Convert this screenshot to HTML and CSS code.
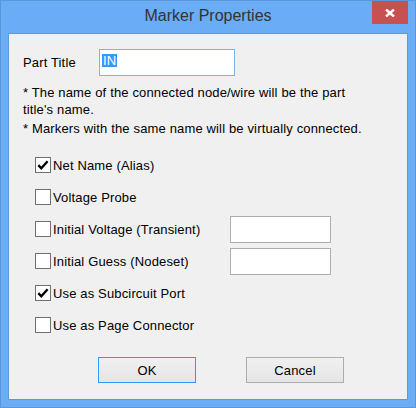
FILE: index.html
```html
<!DOCTYPE html>
<html>
<head>
<meta charset="utf-8">
<link rel="stylesheet" href="styles.css">
</head>
<body>
<div class="window">
  <div class="titlebar">
    <span class="title">Marker Properties</span>
    <div class="close">
      <svg width="10" height="8" viewBox="0 0 10 8"><path d="M1 0.5 L9 7.5 M9 0.5 L1 7.5" stroke="#fff" stroke-width="2.4"/></svg>
    </div>
  </div>
  <div class="client">
    <div class="title-row">
      <span class="lbl">Part Title</span>
      <div class="textbox focus"><span class="sel">IN</span></div>
    </div>
    <p class="note">* The name of the connected node/wire will be the part title's name.</p>
    <p class="note">* Markers with the same name will be virtually connected.</p>
    <div class="options">
      <div class="row"><span class="cb checked"><svg width="14" height="14" viewBox="0 0 14 14"><path d="M2.3 7.2 L5.3 10.3 L11.6 3.2" fill="none" stroke="#000" stroke-width="2.4"/></svg></span><span>Net Name (Alias)</span></div>
      <div class="row"><span class="cb"></span><span>Voltage Probe</span></div>
      <div class="row"><span class="cb"></span><span class="grow">Initial Voltage (Transient)</span><div class="textbox plain"></div></div>
      <div class="row"><span class="cb"></span><span class="grow">Initial Guess (Nodeset)</span><div class="textbox plain"></div></div>
      <div class="row"><span class="cb checked"><svg width="14" height="14" viewBox="0 0 14 14"><path d="M2.3 7.2 L5.3 10.3 L11.6 3.2" fill="none" stroke="#000" stroke-width="2.4"/></svg></span><span>Use as Subcircuit Port</span></div>
      <div class="row"><span class="cb"></span><span>Use as Page Connector</span></div>
    </div>
    <div class="buttons">
      <div class="btn default">OK</div>
      <div class="btn">Cancel</div>
    </div>
  </div>
</div>
</body>
</html>
```
FILE: styles.css
```css
html, body {
  margin: 0;
  padding: 0;
}
body {
  font-family: "Liberation Sans", Arial, sans-serif;
  font-size: 13px;
  letter-spacing: 0.15px;
  color: #000;
  background: #fff;
}
.window {
  width: 416px;
  height: 408px;
  box-sizing: border-box;
  background: #6aadf6;
  border: 1px solid #5a96dc;
  position: relative;
  display: flex;
  flex-direction: column;
}
.titlebar {
  height: 32px;
  display: flex;
  align-items: center;
  justify-content: center;
  flex: none;
}
.title {
  font-size: 16px;
  letter-spacing: 0;
  color: #333;
  margin-top: -2px;
}
.close {
  position: absolute;
  top: 0;
  right: 7px;
  width: 36px;
  height: 23px;
  background: #c75050;
  display: flex;
  align-items: center;
  justify-content: center;
}
.close svg {
  display: block;
}
.client {
  margin: 0 7px;
  height: 367px;
  box-sizing: border-box;
  background: #f0f0f0;
  border: 1px solid #5d9ad9;
  padding: 15px 14px 0 14px;
  display: flex;
  flex-direction: column;
}
.title-row {
  display: flex;
  align-items: center;
  height: 27px;
}
.lbl {
  width: 76px;
}
.textbox {
  box-sizing: border-box;
  height: 27px;
  background: #fff;
  border: 1px solid #abadb3;
}
.textbox.focus {
  width: 136px;
  border-color: #7eb4ea;
  display: flex;
  align-items: center;
  padding-left: 2px;
}
.sel {
  background: #3399ff;
  color: #fff;
  line-height: 13px;
  padding: 0 1px;
  margin-top: -4px;
}
.note {
  margin: 8px 0 0 0;
  line-height: 17px;
  width: 345px;
}
.note + .note {
  margin-top: 2px;
}
.options {
  margin-top: 12px;
  display: flex;
  flex-direction: column;
}
.row {
  height: 32px;
  display: flex;
  align-items: center;
  padding-left: 12px;
}
.cb {
  width: 16px;
  height: 16px;
  box-sizing: border-box;
  border: 1px solid #707070;
  background: #fff;
  margin-right: 2px;
  display: flex;
  align-items: center;
  justify-content: center;
  flex: none;
}
.cb svg {
  display: block;
}
.grow {
  width: 177px;
}
.textbox.plain {
  width: 101px;
}
.buttons {
  display: flex;
  gap: 50px;
  padding-left: 75px;
  margin-top: 16px;
}
.btn {
  width: 98px;
  height: 26px;
  box-sizing: border-box;
  border: 1px solid #adadad;
  background: linear-gradient(#f0f0f0, #e5e5e5);
  display: flex;
  align-items: center;
  justify-content: center;
}
.btn.default {
  border-color: #3399ff;
}
```
